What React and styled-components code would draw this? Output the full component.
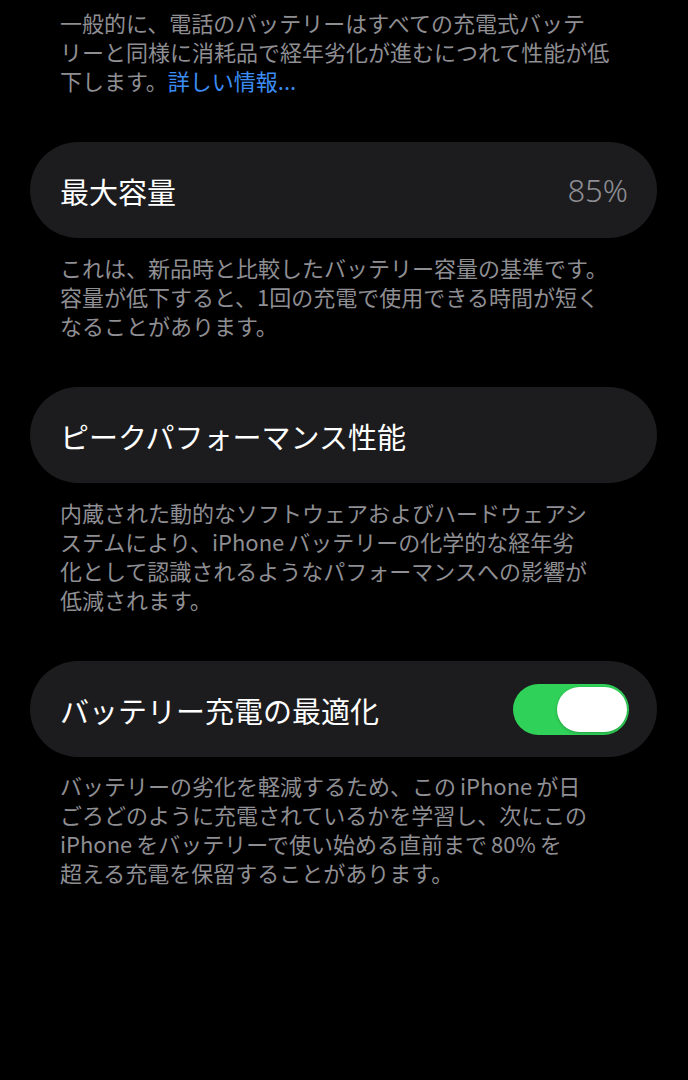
import React from "react";
import styled, { createGlobalStyle } from "styled-components";

const GlobalStyle = createGlobalStyle`
  html, body {
    margin: 0;
    padding: 0;
    background: #000;
  }
  body {
    font-family: "Noto Sans CJK JP", "Noto Sans", sans-serif;
    -webkit-font-smoothing: antialiased;
  }
`;

const Page = styled.main`
  display: flex;
  flex-direction: column;
  padding: 8px 31px 40px 30px;
  min-height: 1080px;
  box-sizing: border-box;
  background: #000;
`;

const Footnote = styled.p`
  margin: ${(p) => p.$top ?? 15}px 0 47px;
  padding: 0 30px;
  font-size: 22px;
  line-height: 29px;
  color: #8e8e93;
  white-space: nowrap;
  letter-spacing: 0;
`;

const Link = styled.span`
  color: #3b8cf5;
`;

const Gap = styled.span`
  display: inline-block;
  width: 4px;
`;

const Card = styled.section`
  display: flex;
  align-items: center;
  justify-content: space-between;
  height: 96px;
  padding: 0 28px 0 30px;
  border-radius: 48px;
  background: #1c1c1e;
  box-sizing: border-box;
`;

const Title = styled.span`
  font-size: 29px;
  line-height: 1;
  color: #fff;
  padding-top: 2px;
`;

const Value = styled.span`
  font-family: "Noto Sans", "Noto Sans CJK JP", sans-serif;
  font-size: 31px;
  font-weight: 300;
  line-height: 1;
  color: #8e8e93;
  padding-right: 1px;
`;

const Switch = styled.button`
  display: flex;
  align-items: center;
  justify-content: ${(p) => (p.$on ? "flex-end" : "flex-start")};
  width: 116px;
  height: 51px;
  padding: 0 2px;
  border: none;
  border-radius: 26px;
  background: ${(p) => (p.$on ? "#30d158" : "#39393d")};
  box-sizing: border-box;
  cursor: pointer;
`;

const Knob = styled.span`
  display: block;
  width: 70px;
  height: 45px;
  border-radius: 23px;
  background: #fff;
  box-shadow: 0 1px 3px rgba(0, 0, 0, 0.25);
`;

export default function App() {
  const [optimized, setOptimized] = React.useState(true);

  return (
    <>
      <GlobalStyle />
      <Page>
        <Footnote $top={0}>
          一般的に、電話のバッテリーはすべての充電式バッテ
          <br />
          リーと同様に消耗品で経年劣化が進むにつれて性能が低
          <br />
          下します。<Link>詳しい情報...</Link>
        </Footnote>

        <Card>
          <Title>最大容量</Title>
          <Value>85%</Value>
        </Card>
        <Footnote>
          これは、新品時と比較したバッテリー容量の基準です。
          <br />
          容量が低下すると、1回の充電で使用できる時間が短く
          <br />
          なることがあります。
        </Footnote>

        <Card>
          <Title>ピークパフォーマンス性能</Title>
        </Card>
        <Footnote>
          内蔵された動的なソフトウェアおよびハードウェアシ
          <br />
          ステムにより、iPhone<Gap />バッテリーの化学的な経年劣
          <br />
          化として認識されるようなパフォーマンスへの影響が
          <br />
          低減されます。
        </Footnote>

        <Card>
          <Title>バッテリー充電の最適化</Title>
          <Switch
            $on={optimized}
            aria-pressed={optimized}
            onClick={() => setOptimized((v) => !v)}
          >
            <Knob />
          </Switch>
        </Card>
        <Footnote $top={14}>
          バッテリーの劣化を軽減するため、この<Gap />iPhone<Gap />が日
          <br />
          ごろどのように充電されているかを学習し、次にこの
          <br />
          iPhone<Gap />をバッテリーで使い始める直前まで<Gap />80%<Gap />を
          <br />
          超える充電を保留することがあります。
        </Footnote>
      </Page>
    </>
  );
}
